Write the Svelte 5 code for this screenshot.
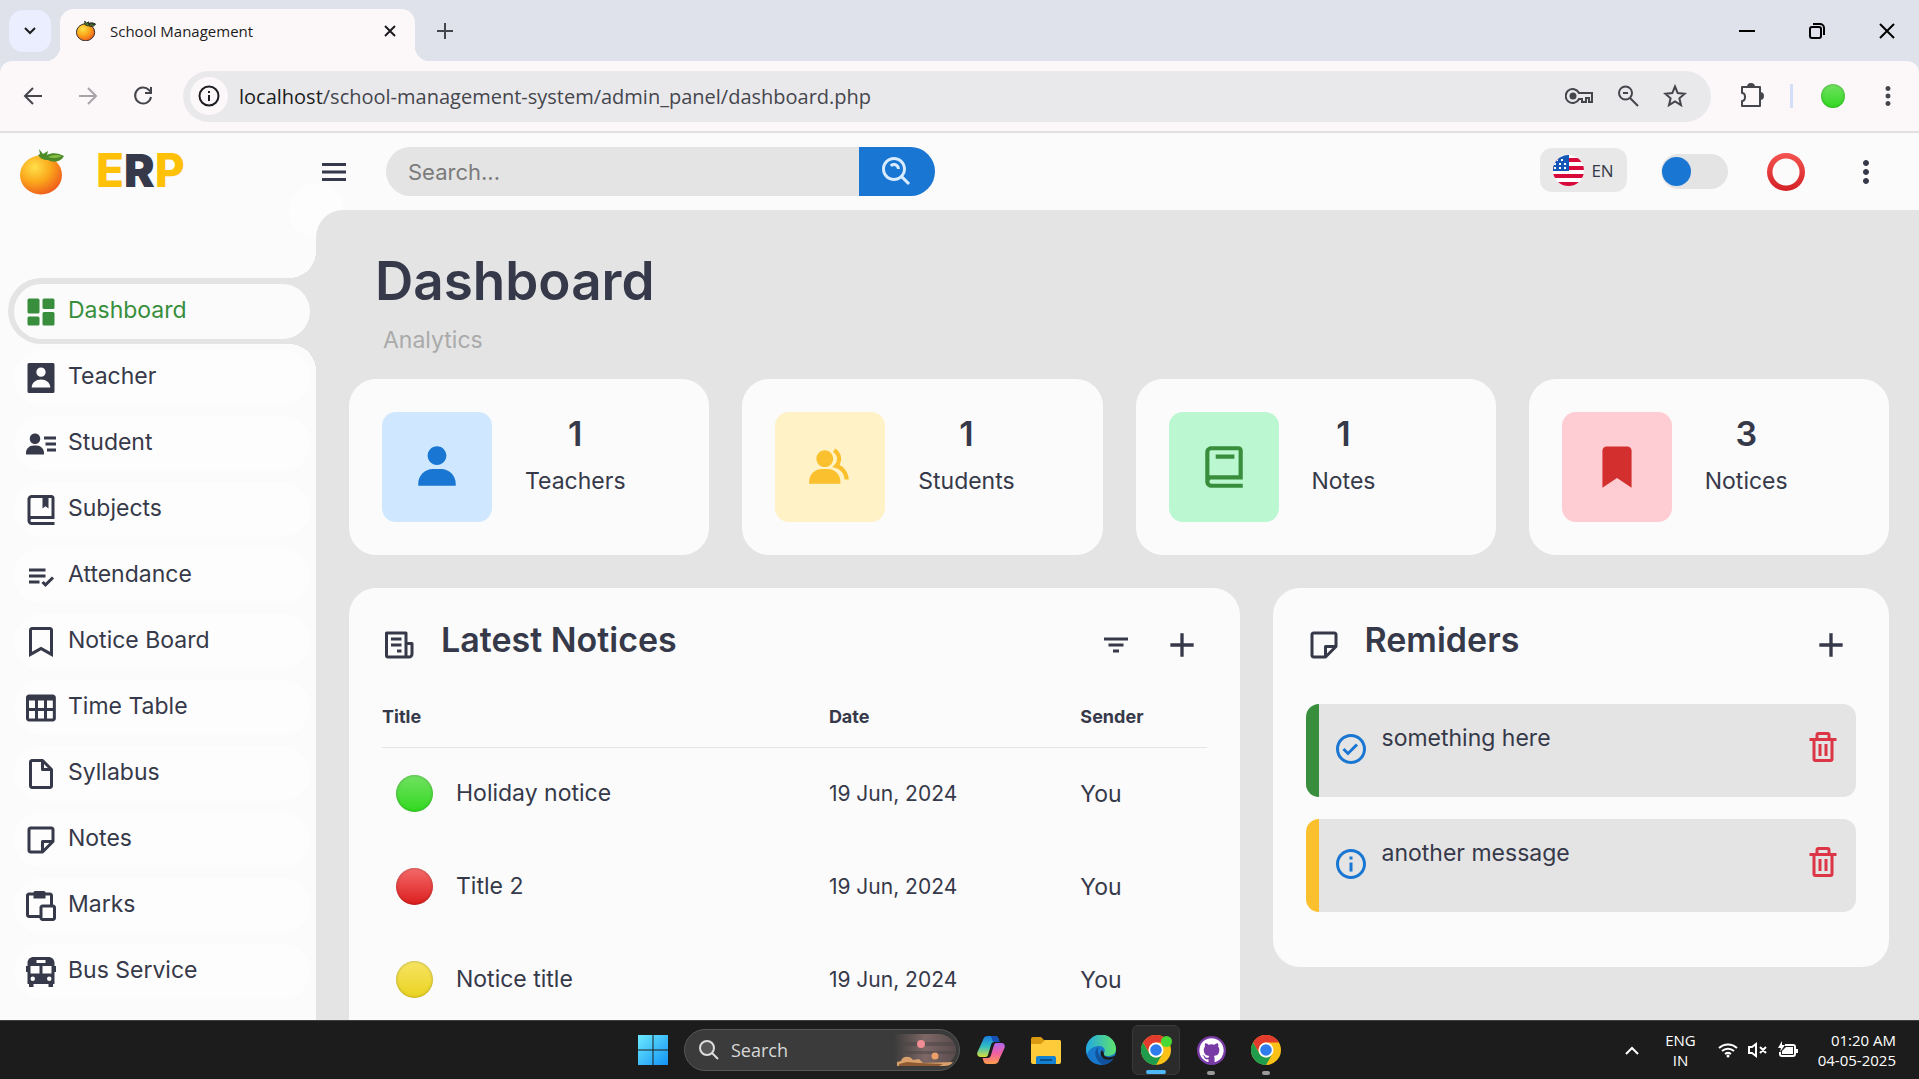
<script lang="ts">
	const icons = {
		dashboard:
			"M4 13h6a1 1 0 0 0 1-1V4a1 1 0 0 0-1-1H4a1 1 0 0 0-1 1v8a1 1 0 0 0 1 1zm-1 7a1 1 0 0 0 1 1h6a1 1 0 0 0 1-1v-4a1 1 0 0 0-1-1H4a1 1 0 0 0-1 1v4zm10 0a1 1 0 0 0 1 1h6a1 1 0 0 0 1-1v-7a1 1 0 0 0-1-1h-6a1 1 0 0 0-1 1v7zm1-10h6a1 1 0 0 0 1-1V4a1 1 0 0 0-1-1h-6a1 1 0 0 0-1 1v5a1 1 0 0 0 1 1z",
		badge: "M4 2h16a1 1 0 0 1 1 1v18a1 1 0 0 1-1 1H4a1 1 0 0 1-1-1V3a1 1 0 0 1 1-1zm8 3a3.1 3.1 0 1 0 0 6.2a3.1 3.1 0 0 0 0-6.2zm0 8c-3.3 0-6.2 2-6.2 5.4h12.4c0-3.4-2.9-5.4-6.2-5.4z",
		student:
			"M15 11h7v2h-7zm1 4h6v2h-6zm-2-8h8v2h-8zM4 19h10v-1c0-2.757-2.243-5-5-5H7c-2.757 0-5 2.243-5 5v1h2zm4-7c1.995 0 3.5-1.505 3.5-3.5S9.995 5 8 5 4.5 6.505 4.5 8.5 6.005 12 8 12z",
		subjects:
			"M6 22h15v-2H6.012C5.55 19.988 5 19.805 5 19s.55-.988 1.012-1H21V4c0-1.103-.897-2-2-2H6c-1.206 0-3 .799-3 3v14c0 2.201 1.794 3 3 3zM5 8V5c0-.805.55-.988 1-1h7v7l2-1.5 2 1.5V4h2v12H5V8z",
		attendance:
			"M4 7h11v2H4zm0 4h11v2H4zm0 4h7v2H4zm15.299-2.708-4.3 4.291-1.292-1.291-1.414 1.415 2.706 2.704 5.712-5.703z",
		bookmark:
			"M18 2H6c-1.103 0-2 .897-2 2v18l8-4.572L20 22V4c0-1.103-.897-2-2-2zm0 16.553-6-3.428-6 3.428V4h12v14.553z",
		table: "M4 21h15.893c1.103 0 2-.897 2-2V5c0-1.103-.897-2-2-2H4c-1.103 0-2 .897-2 2v14c0 1.103.897 2 2 2zm0-2v-5h4v5H4zM14 7v5h-4V7h4zM8 7v5H4V7h4zm2 12v-5h4v5h-4zm6 0v-5h3.894v5H16zm3.893-7H16V7h3.893v5z",
		file: "M19.937 8.68c-.011-.032-.02-.063-.033-.094a.997.997 0 0 0-.196-.293l-6-6a.997.997 0 0 0-.293-.196c-.03-.014-.062-.022-.094-.033a.991.991 0 0 0-.259-.051C13.04 2.011 13.021 2 13 2H6c-1.103 0-2 .897-2 2v16c0 1.103.897 2 2 2h12c1.103 0 2-.897 2-2V9c0-.021-.011-.04-.013-.062a.99.99 0 0 0-.05-.258zM16.586 8H14V5.414L16.586 8zM6 20V4h6v5a1 1 0 0 0 1 1h5l.002 10H6z",
		note: "M19 3H5c-1.103 0-2 .897-2 2v14c0 1.103.897 2 2 2h8a.996.996 0 0 0 .707-.293l7-7a.997.997 0 0 0 .196-.293c.014-.03.022-.061.033-.093a.991.991 0 0 0 .051-.259c.002-.021.013-.041.013-.062V5c0-1.103-.897-2-2-2zM5 5h14v7h-6a1 1 0 0 0-1 1v6H5V5zm9 12.586V14h3.586L14 17.586z",
		paste: "M20 11V5c0-1.103-.897-2-2-2h-3a1 1 0 0 0-1-1H8a1 1 0 0 0-1 1H4c-1.103 0-2 .897-2 2v13c0 1.103.897 2 2 2h7c0 1.103.897 2 2 2h7c1.103 0 2-.897 2-2v-7c0-1.103-.897-2-2-2zm-9 2v5H4V5h3v2h8V5h3v6h-5c-1.103 0-2 .897-2 2zm2 7v-7h7l.001 7H13z",
		bus: "M7 2h10c2.2 0 4 1.5 4 4v2h1v4h-1v8h-1v2h-3v-2H7v2H4v-2H3v-8H2V8h1V6c0-2.5 1.8-4 4-4zm2 2v2h6V4zM5 8v5h6V8zm8 0v5h6V8zM6.5 15a1.5 1.5 0 1 0 0 3a1.5 1.5 0 0 0 0-3zm11 0a1.5 1.5 0 1 0 0 3a1.5 1.5 0 0 0 0-3z",
		menu: "M4 6h16v2H4zm0 5h16v2H4zm0 5h16v2H4z",
		search: "M10 18a7.952 7.952 0 0 0 4.897-1.688l4.396 4.396 1.414-1.414-4.396-4.396A7.952 7.952 0 0 0 18 10c0-4.411-3.589-8-8-8s-8 3.589-8 8 3.589 8 8 8zm0-14c3.309 0 6 2.691 6 6s-2.691 6-6 6-6-2.691-6-6 2.691-6 6-6zM11.412 8.586c.379.38.588.882.588 1.414h2a3.977 3.977 0 0 0-1.174-2.828c-1.514-1.512-4.139-1.512-5.652 0l1.412 1.416c.76-.758 2.07-.756 2.826-.002z",
		dots: "M12 10c-1.1 0-2 .9-2 2s.9 2 2 2 2-.9 2-2-.9-2-2-2zm0-6c-1.1 0-2 .9-2 2s.9 2 2 2 2-.9 2-2-.9-2-2-2zm0 12c-1.1 0-2 .9-2 2s.9 2 2 2 2-.9 2-2-.9-2-2-2z",
		user: "M7.5 6.5C7.5 8.981 9.519 11 12 11s4.5-2.019 4.5-4.5S14.481 2 12 2 7.5 4.019 7.5 6.5zM20 21h1v-1c0-3.859-3.141-7-7-7h-4c-3.86 0-7 3.141-7 7v1h17z",
		group: "M9.5 12c2.206 0 4-1.794 4-4s-1.794-4-4-4-4 1.794-4 4 1.794 4 4 4zm1.5 1H8c-3.309 0-6 2.691-6 6v1h15v-1c0-3.309-2.691-6-6-6zM16.604 11.048a5.67 5.67 0 0 0 .751-3.44c-.179-1.784-1.175-3.361-2.803-4.44l-1.105 1.666c1.119.742 1.8 1.799 1.918 2.974a3.693 3.693 0 0 1-1.072 2.986l-1.192 1.192 1.618.475C18.951 13.701 19 17.957 19 18h2c0-1.789-.956-5.285-4.396-6.952z",
		book: "M6 22h15v-2H6.012C5.55 19.988 5 19.805 5 19s.55-.988 1.012-1H21V4c0-1.103-.897-2-2-2H6c-1.206 0-3 .799-3 3v14c0 2.201 1.794 3 3 3zM5 8V5c0-.805.55-.988 1-1h13v12H5V8zM8 6h9v2H8z",
		bookmarkSolid: "M19 10.132v-6c0-1.103-.897-2-2-2H7c-1.103 0-2 .897-2 2V22l7-4.666L19 22V10.132z",
		news: "M3 3h13a1 1 0 0 1 1 1v6h3a1 1 0 0 1 1 1v7a3 3 0 0 1-3 3H4a2 2 0 0 1-2-2V4a1 1 0 0 1 1-1zm1 2v14h11V5zm13 7v7h1a1 1 0 0 0 1-1v-6zM6 7h7v2H6zm0 4h7v2H6zm4 4h3v2h-3z",
		filter: "M7 11h10v2H7zM4 7h16v2H4zm6 8h4v2h-4z",
		plus: "M19 11h-6V5h-2v6H5v2h6v6h2v-6h6z",
		trash: "M5 20a2 2 0 0 0 2 2h10a2 2 0 0 0 2-2V8h2V6h-4V4a2 2 0 0 0-2-2H9a2 2 0 0 0-2 2v2H3v2h2zM9 4h6v2H9zM7 8h10v12H7zM9 10h2v8H9zm4 0h2v8h-2z",
		check: "M12 2C6.486 2 2 6.486 2 12s4.486 10 10 10 10-4.486 10-10S17.514 2 12 2zm0 18c-4.411 0-8-3.589-8-8s3.589-8 8-8 8 3.589 8 8-3.589 8-8 8zM9.999 13.587 7.7 11.292l-1.412 1.416 3.713 3.705 6.706-6.706-1.414-1.414z",
		info: "M12 2C6.486 2 2 6.486 2 12s4.486 10 10 10 10-4.486 10-10S17.514 2 12 2zm0 18c-4.411 0-8-3.589-8-8s3.589-8 8-8 8 3.589 8 8-3.589 8-8 8zM11 11h2v6h-2zm0-4h2v2h-2z",
	};

	const menu = [
		{ label: "Dashboard", icon: icons.dashboard },
		{ label: "Teacher", icon: icons.badge },
		{ label: "Student", icon: icons.student },
		{ label: "Subjects", icon: icons.subjects },
		{ label: "Attendance", icon: icons.attendance },
		{ label: "Notice Board", icon: icons.bookmark },
		{ label: "Time Table", icon: icons.table },
		{ label: "Syllabus", icon: icons.file },
		{ label: "Notes", icon: icons.note },
		{ label: "Marks", icon: icons.paste },
		{ label: "Bus Service", icon: icons.bus },
	];

	const stats = [
		{ count: 1, label: "Teachers", icon: icons.user, tone: "blue" },
		{ count: 1, label: "Students", icon: icons.group, tone: "yellow" },
		{ count: 1, label: "Notes", icon: icons.book, tone: "green" },
		{ count: 3, label: "Notices", icon: icons.bookmarkSolid, tone: "red" },
	];

	const notices = [
		{ title: "Holiday notice", date: "19 Jun, 2024", sender: "You", tone: "green" },
		{ title: "Title 2", date: "19 Jun, 2024", sender: "You", tone: "red" },
		{ title: "Notice title", date: "19 Jun, 2024", sender: "You", tone: "yellow" },
	];

	const reminders = [
		{ text: "something here", icon: icons.check, tone: "green" },
		{ text: "another message", icon: icons.info, tone: "yellow" },
	];

	let active = $state("Dashboard");
	let search = $state("");
	let dark = $state(false);
</script>

{#snippet icon(d: string, size = 36)}
	<svg width={size} height={size} viewBox="0 0 24 24" fill="currentColor" fill-rule="evenodd" aria-hidden="true">
		<path {d} />
	</svg>
{/snippet}

{#snippet fruit(size: number)}
	<svg width={size} height={size} viewBox="0 0 46 46" aria-hidden="true">
		<defs>
			<radialGradient id="peel" cx="0.35" cy="0.3" r="0.75">
				<stop offset="0" stop-color="#ffe04a" />
				<stop offset="0.5" stop-color="#fba91c" />
				<stop offset="1" stop-color="#ee5a1c" />
			</radialGradient>
		</defs>
		<ellipse cx="22" cy="26" rx="21" ry="19.5" fill="url(#peel)" />
		<path d="M20 0l4 5 5-3-1 4c5-3 12-2 17 1-3 6-10 7-16 4-5 0-8-2-10-5l2-1z" fill="#4d8a2a" />
		<path d="M29 8c4-2 9-3 14-1-4 2-9 3-14 1z" fill="#86bd45" />
	</svg>
{/snippet}

{#snippet chrome()}
	<svg width="30" height="30" viewBox="0 0 30 30" aria-hidden="true">
		<circle cx="15" cy="15" r="15" fill="#fbc116" />
		<path d="M2 7.5A15 15 0 0 1 28 7.5H15a7.5 7.5 0 0 0-6.5 11z" fill="#e33b2e" />
		<path d="M2 7.5A15 15 0 0 0 15 30l6.5-11.3a7.5 7.5 0 0 1-13 0z" fill="#1f9d4d" />
		<circle cx="15" cy="15" r="7.5" fill="#fff" />
		<circle cx="15" cy="15" r="5.8" fill="#2f7ded" />
	</svg>
{/snippet}

<div class="screen">
	<header class="browser">
		<div class="tabs">
			<button class="tab-search" aria-label="Search tabs">
				<svg width="14" height="10" viewBox="0 0 14 10"><path d="M2 2l5 5 5-5" /></svg>
			</button>
			<div class="tab">
				{@render fruit(20)}
				<span>School Management</span>
				<button aria-label="Close tab">
					<svg width="14" height="14" viewBox="0 0 14 14"><path d="M2 2l10 10M12 2L2 12" /></svg>
				</button>
			</div>
			<button class="new-tab" aria-label="New tab">
				<svg width="18" height="18" viewBox="0 0 18 18"><path d="M9 1v16M1 9h16" /></svg>
			</button>
			<div class="window-buttons">
				<button aria-label="Minimize">
					<svg width="16" height="16" viewBox="0 0 16 16"><path d="M0 8h16" /></svg>
				</button>
				<button aria-label="Restore">
					<svg width="16" height="16" viewBox="0 0 16 16">
						<rect x="1" y="4" width="11" height="11" rx="2" />
						<path d="M4 1h7a4 4 0 0 1 4 4v7" />
					</svg>
				</button>
				<button aria-label="Close">
					<svg width="16" height="16" viewBox="0 0 16 16"><path d="M1 1l14 14M15 1L1 15" /></svg>
				</button>
			</div>
		</div>
		<div class="toolbar">
			<button aria-label="Back">
				<svg width="20" height="20" viewBox="0 0 20 20"><path d="M19 10H2M10 2l-8 8 8 8" /></svg>
			</button>
			<button class="faded" aria-label="Forward">
				<svg width="20" height="20" viewBox="0 0 20 20"><path d="M1 10h17M10 2l8 8-8 8" /></svg>
			</button>
			<button aria-label="Reload">
				<svg width="20" height="20" viewBox="0 0 20 20">
					<path d="M18 11a8 8 0 1 1-2-7l2 2M18 1v6h-6" />
				</svg>
			</button>
			<div class="address">
				<button class="site-info" aria-label="Site information">
					<svg width="22" height="22" viewBox="0 0 22 22">
						<circle cx="11" cy="11" r="9.5" /><path d="M11 10v6M11 6v2" />
					</svg>
				</button>
				<p class="url"><b>localhost</b>/school-management-system/admin_panel/dashboard.php</p>
				<button aria-label="Passwords">
					<svg width="28" height="20" viewBox="0 0 28 20">
						<path d="M14 7h13v9h-3v-4h-3v4h-4v-3h-3a7 7 0 1 1 0-6z" />
						<circle cx="8" cy="10" r="2.5" fill="currentColor" />
					</svg>
				</button>
				<button aria-label="Zoom">
					<svg width="22" height="22" viewBox="0 0 22 22">
						<circle cx="8.5" cy="8" r="6.5" /><path d="M13 13l8 8M6 8h5" />
					</svg>
				</button>
				<button aria-label="Bookmark this tab">
					<svg width="24" height="24" viewBox="0 0 24 24">
						<path d="M12 2.5l2.7 6.600 7 .6-5.3 4.6 1.6 6.900-6-3.700-6 3.700 1.600-6.900-5.300-4.600 7-.6z" />
					</svg>
				</button>
			</div>
			<button class="extensions" aria-label="Extensions">
				<svg width="26" height="26" viewBox="0 0 26 26">
					<path d="M3 4h18v19H3v-5c4 0 4-8 0-8z" stroke-linejoin="round" />
					<path d="M9 4a3 3 0 0 1 6 0zM21 10a3 3 0 0 1 0 6z" fill="currentColor" />
				</svg>
			</button>
			<span class="divider"></span>
			<button class="profile" aria-label="Profile"><span class="ball green"></span></button>
			<button class="kebab" aria-label="Browser menu">{@render icon(icons.dots, 30)}</button>
		</div>
	</header>

	<div class="page">
		<aside>
			<a class="brand" href="#home">
				{@render fruit(46)}
				<span>E<b>R</b>P</span>
			</a>
			<ul>
				{#each menu as item}
					<li class:active={active === item.label}>
						<a href="#{item.label}" onclick={() => (active = item.label)}>
							{@render icon(item.icon)}
							<span>{item.label}</span>
						</a>
					</li>
				{/each}
			</ul>
		</aside>

		<div class="content">
			<nav>
				<button aria-label="Toggle menu">{@render icon(icons.menu)}</button>
				<form onsubmit={(event) => event.preventDefault()}>
					<input type="search" aria-label="Search" placeholder="Search..." bind:value={search} />
					<button aria-label="Search">{@render icon(icons.search)}</button>
				</form>
				<button class="language">
					<svg width="31" height="31" viewBox="0 0 31 31" aria-hidden="true">
						<defs><clipPath id="flag"><circle cx="15.5" cy="15.5" r="15.5" /></clipPath></defs>
						<g clip-path="url(#flag)">
							<path d="M0 0h31v31H0z" fill="#fff" />
							<path d="M0 3h31v4H0zM0 11h31v4H0zM0 19h31v4H0zM0 27h31v4H0z" fill="#d80a3a" />
							<path d="M0 0h16v16H0z" fill="#1557b7" />
							<path d="M3 5h10M1 9h14M1 13h14" stroke="#fff" stroke-width="2" stroke-dasharray="2 3" />
						</g>
					</svg>
					EN
				</button>
				<label class="switch">
					<input type="checkbox" aria-label="Dark mode" bind:checked={dark} />
					<span></span>
				</label>
				<button class="ring" aria-label="Account"></button>
				<button class="more" aria-label="More options">{@render icon(icons.dots)}</button>
			</nav>

			<main>
				<h1>Dashboard</h1>
				<p class="subtitle">Analytics</p>

				<ul class="stats">
					{#each stats as stat}
						<li>
							<span class="tile {stat.tone}">{@render icon(stat.icon, 50)}</span>
							<div>
								<h3>{stat.count}</h3>
								<p>{stat.label}</p>
							</div>
						</li>
					{/each}
				</ul>

				<div class="panels">
					<section>
						<div class="head">
							{@render icon(icons.news)}
							<h3>Latest Notices</h3>
							<button aria-label="Filter notices">{@render icon(icons.filter)}</button>
							<button aria-label="Add notice">{@render icon(icons.plus, 40)}</button>
						</div>
						<table>
							<thead>
								<tr>
									<th class="title">Title</th>
									<th class="date">Date</th>
									<th>Sender</th>
								</tr>
							</thead>
							<tbody>
								{#each notices as notice}
									<tr>
										<td>
											<div class="notice">
												<span class="ball {notice.tone}"></span>
												<span class="name">{notice.title}</span>
											</div>
										</td>
										<td class="date">{notice.date}</td>
										<td>{notice.sender}</td>
									</tr>
								{/each}
							</tbody>
						</table>
					</section>

					<section>
						<div class="head">
							{@render icon(icons.note)}
							<h3>Remiders</h3>
							<button aria-label="Add reminder">{@render icon(icons.plus, 40)}</button>
						</div>
						<ul class="reminders">
							{#each reminders as reminder}
								<li class={reminder.tone}>
									{@render icon(reminder.icon)}
									<p>{reminder.text}</p>
									<button aria-label="Delete reminder">{@render icon(icons.trash)}</button>
								</li>
							{/each}
						</ul>
					</section>
				</div>
			</main>
		</div>
	</div>

	<footer class="taskbar">
		<div class="apps">
			<button aria-label="Start">
				<svg width="30" height="30" viewBox="0 0 30 30">
					<defs>
						<linearGradient id="start" x1="0" y1="0" x2="1" y2="1">
							<stop offset="0" stop-color="#6ceaff" />
							<stop offset="1" stop-color="#1293f5" />
						</linearGradient>
					</defs>
					<path
						d="M0 0h14.5v14.5H0zM15.5 0H30v14.5H15.5zM0 15.5h14.5V30H0zM15.5 15.5H30V30H15.5z"
						fill="url(#start)"
					/>
				</svg>
			</button>
			<button class="task-search">
				<svg width="20" height="20" viewBox="0 0 20 20" fill="#555" stroke="#ddd" stroke-width="2">
					<circle cx="8" cy="8" r="7" /><path d="M13 13l6 6" />
				</svg>
				Search
				<svg class="scene" width="62" height="36" viewBox="0 0 62 36">
					<defs>
						<linearGradient id="sky" x1="0" x2="1">
							<stop offset="0" stop-color="#3b3b3b" />
							<stop offset="0.5" stop-color="#7d6866" />
							<stop offset="1" stop-color="#594b4d" />
						</linearGradient>
					</defs>
					<path d="M0 2h44a18 16 0 0 1 0 32H0z" fill="url(#sky)" />
					<path d="M12 10h48l2 4H8zM10 19h52l-1 3H14z" fill="#4a4144" opacity="0.5" />
					<circle cx="27" cy="12" r="4" fill="#f08c93" />
					<circle cx="41" cy="24" r="3.5" fill="#eaa068" />
					<path d="M3 34v-4l4-1c1-5 9-6 12-1l6-1 4 4 30-1c-2 3-5 4-9 4z" fill="#d9a06c" />
					<path d="M5 32l8-2 12 1 24 1-4 2H5z" fill="#8d5a33" />
				</svg>
			</button>
			<button aria-label="Copilot">
				<svg width="28" height="28" viewBox="0 0 28 28">
					<defs>
						<linearGradient id="cool" x1="0" y1="0" x2="0" y2="1">
							<stop offset="0" stop-color="#1b7de0" />
							<stop offset="0.5" stop-color="#32bdc2" />
							<stop offset="1" stop-color="#d8df3c" />
						</linearGradient>
						<linearGradient id="warm" x1="0" y1="0" x2="0" y2="1">
							<stop offset="0" stop-color="#ff9d4d" />
							<stop offset="0.5" stop-color="#f2609e" />
							<stop offset="1" stop-color="#b067ef" />
						</linearGradient>
					</defs>
					<path
						d="M6 4c.7-2.500 2-4 5-4h7c2 0 3 1 3.500 3l1 3h-5c-2 0-3 1-3.500 3l-3 10c-.5 1.500-1.500 2-3 2H3.500C1 21-.5 19 .5 16z"
						fill="url(#cool)"
					/>
					<path
						transform="rotate(180 14 14)"
						d="M6 4c.7-2.500 2-4 5-4h7c2 0 3 1 3.500 3l1 3h-5c-2 0-3 1-3.500 3l-3 10c-.5 1.500-1.500 2-3 2H3.500C1 21-.5 19 .5 16z"
						fill="url(#warm)"
					/>
					<path d="M14 0h4c2 0 3 1 3.500 3l1 3h-5C15 6 15 2 14 0z" fill="#1751b8" />
				</svg>
			</button>
			<button aria-label="File Explorer">
				<svg width="30" height="27" viewBox="0 0 30 27">
					<path d="M0 2a2 2 0 0 1 2-2h8l3 3h15a2 2 0 0 1 2 2v6H0z" fill="#d99a12" />
					<path d="M0 7h10l4-4h14a2 2 0 0 1 2 2v20a2 2 0 0 1-2 2H2a2 2 0 0 1-2-2z" fill="#fecb3b" />
					<path d="M5 27v-6a2 2 0 0 1 2-2h16a2 2 0 0 1 2 2v6z" fill="#1482d0" />
					<path d="M9 23h12" stroke="#095091" stroke-width="2" />
				</svg>
			</button>
			<button aria-label="Edge">
				<svg width="30" height="30" viewBox="0 0 30 30">
					<defs>
						<linearGradient id="wave" x1="0" x2="1">
							<stop offset="0" stop-color="#22a8e2" />
							<stop offset="1" stop-color="#5fe36c" />
						</linearGradient>
					</defs>
					<circle cx="15" cy="15" r="15" fill="#1878cb" />
					<path
						d="M0 15a15 15 0 0 1 30-1c0 5-4 7-8 7-3 0-5-1-4-3 2-3 0-7-5-7-6 0-11 4-12 9z"
						fill="url(#wave)"
					/>
					<path d="M12 12c-5 4-3 14 5 18 6-1 9-4 11-7-8 4-18 0-16-11z" fill="#10529d" />
					<path d="M18 18c-1 4 5 6 12 2l-1 3c-6 3-12 2-14-2-1-3 0-5 1-6z" fill="#1d1d1d" />
				</svg>
			</button>
			<button class="app focused" aria-label="Chrome">
				{@render chrome()}
				<i class="badge"></i>
			</button>
			<button class="app" aria-label="GitHub Desktop">
				<svg width="29" height="29" viewBox="0 0 16 16">
					<circle cx="8" cy="8" r="8" fill="#783aa5" />
					<path
						transform="translate(1.3 1.3) scale(0.84)"
						fill="#fff"
						d="M8 0C3.58 0 0 3.58 0 8c0 3.54 2.29 6.53 5.47 7.59.4.07.55-.17.55-.38 0-.19-.01-.82-.01-1.49-2.01.37-2.53-.49-2.69-.94-.09-.23-.48-.94-.82-1.13-.28-.15-.68-.52-.01-.53.63-.01 1.08.58 1.23.82.72 1.21 1.87.87 2.33.66.07-.52.28-.87.51-1.07-1.78-.2-3.64-.89-3.64-3.95 0-.87.31-1.59.82-2.15-.08-.2-.36-1.02.08-2.12 0 0 .67-.21 2.2.82a7.6 7.6 0 0 1 4 0c1.53-1.04 2.2-.82 2.2-.82.44 1.1.16 1.92.08 2.12.51.56.82 1.27.82 2.15 0 3.07-1.87 3.75-3.65 3.95.29.25.54.73.54 1.48 0 1.07-.01 1.93-.01 2.2 0 .21.15.46.55.38A8 8 0 0 0 16 8c0-4.42-3.58-8-8-8z"
					/>
				</svg>
			</button>
			<button class="app" aria-label="Chrome">{@render chrome()}</button>
		</div>
		<div class="tray">
			<button aria-label="Show hidden icons">
				<svg width="14" height="9" viewBox="0 0 14 9"><path d="M1 8l6-6 6 6" /></svg>
			</button>
			<button class="keyboard">ENG<br />IN</button>
			<button class="status" aria-label="Network, volume and battery">
				<svg width="20" height="16" viewBox="0 0 20 16">
					<path d="M1 6a13 13 0 0 1 18 0M4 9a9 9 0 0 1 12 0M7 12a5 5 0 0 1 6 0" />
					<circle cx="10" cy="14" r="1.5" fill="#fff" stroke="none" />
				</svg>
				<svg width="20" height="16" viewBox="0 0 20 16">
					<path d="M1 5h3l4-3v12l-4-3H1zM12 5l6 6M18 5l-6 6" />
				</svg>
				<svg width="20" height="18" viewBox="0 0 20 18">
					<path d="M7 4h8a2 2 0 0 1 2 2v7a2 2 0 0 1-2 2H4a2 2 0 0 1-2-2v-2" />
					<path d="M8 6h7v7H4v-3zM17 8h3v4h-3zM4 0L0 7h3l-1 4 5-7H4z" fill="#fff" stroke="none" />
				</svg>
			</button>
			<button class="clock">01:20 AM<br />04-05-2025</button>
		</div>
	</footer>
</div>

<style>
	:global(body) {
		margin: 0;
	}

	.screen {
		--light: #fbfbfb;
		--grey: #e4e4e4;
		--dark: #363949;
		--blue: #1976d2;
		display: flex;
		flex-direction: column;
		height: 100vh;
		overflow: hidden;
		background: var(--grey);
		color: var(--dark);
		font-family: Inter, "Open Sans", sans-serif;
		font-size: 23px;
	}

	svg {
		flex: none;
		display: block;
	}

	button {
		display: flex;
		align-items: center;
		justify-content: center;
		padding: 0;
		border: 0;
		background: none;
		color: inherit;
		font: inherit;
	}

	a {
		color: inherit;
		text-decoration: none;
	}

	ul {
		margin: 0;
		padding: 0;
		list-style: none;
	}

	h1,
	h3,
	p {
		margin: 0;
	}

	/* browser */
	.browser {
		flex: none;
		background: #dfe2eb;
		color: #45464c;
		font-family: "Open Sans", sans-serif;
	}

	.browser svg:not([fill]) {
		fill: none;
		stroke: currentColor;
		stroke-width: 2;
	}

	.tabs {
		display: flex;
		align-items: center;
		height: 61px;
		padding-left: 9px;
	}

	.tab-search {
		width: 42px;
		height: 42px;
		border-radius: 14px;
		background: #ebeeff;
		color: #1c1c20;
	}

	.tab {
		position: relative;
		align-self: flex-end;
		display: flex;
		align-items: center;
		gap: 14px;
		width: 355px;
		height: 52px;
		margin-left: 9px;
		padding: 0 18px 8px 16px;
		box-sizing: border-box;
		border-radius: 14px 14px 0 0;
		background: #fcf8fa;
		color: #1c1c20;
		font-size: 15px;
	}

	.tab span {
		flex: 1;
	}

	.tab::before,
	.tab::after {
		content: "";
		position: absolute;
		bottom: 0;
		width: 14px;
		height: 14px;
	}

	.tab::before {
		right: 100%;
		background: radial-gradient(circle at 0 0, transparent 14px, #fcf8fa 14px);
	}

	.tab::after {
		left: 100%;
		background: radial-gradient(circle at 100% 0, transparent 14px, #fcf8fa 14px);
	}

	.new-tab {
		margin-left: 21px;
	}

	.window-buttons {
		display: flex;
		gap: 54px;
		margin-left: auto;
		padding-right: 24px;
		color: #000;
	}

	.toolbar {
		display: flex;
		align-items: center;
		height: 70px;
		padding: 0 16px 0 23px;
		border-bottom: 2px solid #e4e0e2;
		border-radius: 12px 12px 0 0;
		background: #fcf8fa;
	}

	.toolbar > button {
		margin-right: 35px;
	}

	.toolbar > .faded {
		color: #a5a4a8;
	}

	.address {
		flex: 1;
		display: flex;
		align-items: center;
		gap: 24px;
		height: 51px;
		margin-left: -5px;
		padding: 0 24px 0 7px;
		border-radius: 26px;
		background: #e9e9ec;
	}

	.site-info {
		width: 38px;
		height: 38px;
		border-radius: 50%;
		background: #fcf8fa;
		color: #1c1c20;
	}

	.url {
		flex: 1;
		margin-left: -13px;
		font-size: 20px;
	}

	.url b {
		color: #1c1c20;
		font-weight: 400;
	}

	.toolbar > .extensions {
		margin: 0 25px 0 28px;
	}

	.divider {
		width: 3px;
		height: 24px;
		background: #d5def8;
	}

	.toolbar > .profile {
		margin: 0 28px;
	}

	.profile .ball {
		width: 24px;
		height: 24px;
	}

	.toolbar > .kebab {
		margin: 0;
	}

	.ball {
		width: 37px;
		height: 37px;
		border-radius: 50%;
		box-shadow: inset 0 0 3px rgb(0 0 0 / 30%);
	}

	.ball.green {
		background: linear-gradient(#72e162, #31d91f);
	}

	.ball.red {
		background: linear-gradient(#f56a6a, #db1d1d);
	}

	.ball.yellow {
		background: linear-gradient(#f6e464, #ead31f);
	}

	/* sidebar */
	.page {
		flex: 1;
		display: flex;
		min-height: 0;
		overflow: hidden;
	}

	aside {
		flex: none;
		width: 316px;
		background: var(--light);
	}

	.brand {
		display: flex;
		align-items: center;
		gap: 31px;
		height: 77px;
		padding-left: 19px;
		color: #fec107;
		font-size: 46px;
		font-weight: 800;
	}

	.brand span {
		padding-bottom: 4px;
	}

	.brand b {
		color: var(--dark);
	}

	aside ul {
		margin-top: 68px;
	}

	aside li {
		position: relative;
		margin-left: 8px;
		padding: 6px 6px 5px;
		border-radius: 33px 0 0 33px;
	}

	aside li a {
		display: flex;
		align-items: center;
		gap: 9px;
		height: 55px;
		padding-left: 9px;
		border-radius: 28px;
		background: #fdfdfd;
	}

	aside li span {
		padding-bottom: 3px;
	}

	aside li.active {
		background: var(--grey);
	}

	aside li.active a {
		background: var(--light);
		color: #388e3c;
	}

	/* rounded joins between the active item and the content area */
	aside li.active::before,
	aside li.active::after {
		content: "";
		position: absolute;
		z-index: 1;
		right: 0;
		width: 27px;
		height: 27px;
	}

	aside li.active::before {
		bottom: 100%;
		background: radial-gradient(circle at 0 0, transparent 27px, var(--grey) 27px);
	}

	aside li.active::after {
		top: 100%;
		background: radial-gradient(circle at 0 100%, transparent 27px, var(--grey) 27px);
	}

	/* top bar */
	.content {
		flex: 1;
		min-width: 0;
	}

	nav {
		position: relative;
		display: flex;
		align-items: center;
		height: 77px;
		padding-right: 35px;
		background: var(--light);
	}

	nav::before {
		content: "";
		position: absolute;
		top: 100%;
		left: 0;
		width: 55px;
		height: 55px;
		border-radius: 50%;
		box-shadow: -27px -27px 0 #fdfdfd;
		pointer-events: none;
	}

	nav form {
		display: flex;
		flex: 0 1 549px;
		height: 49px;
		margin-left: 34px;
	}

	nav input[type="search"] {
		flex: 1;
		min-width: 0;
		padding: 0 22px;
		border: 0;
		border-radius: 25px 0 0 25px;
		background: var(--grey);
		color: inherit;
		font: inherit;
		font-size: 22px;
	}

	nav input::placeholder {
		color: #7b7b7b;
	}

	nav form button {
		width: 76px;
		border-radius: 0 25px 25px 0;
		background: var(--blue);
		color: #d9ebff;
	}

	.language {
		gap: 7px;
		width: 87px;
		height: 44px;
		margin-bottom: 3px;
		margin-left: auto;
		border-radius: 12px;
		background: #e8e8e8;
		font-family: "Open Sans", sans-serif;
		font-size: 17px;
	}

	.switch {
		margin-left: 34px;
		height: 35px;
	}

	.switch input {
		position: absolute;
		opacity: 0;
	}

	.switch span {
		display: flex;
		align-items: center;
		width: 67px;
		height: 35px;
		border-radius: 18px;
		background: var(--grey);
	}

	.switch span::before {
		content: "";
		width: 29px;
		height: 29px;
		margin: 0 1px;
		border-radius: 50%;
		background: var(--blue);
	}

	.switch input:checked + span {
		justify-content: flex-end;
	}

	.ring {
		width: 38px;
		height: 38px;
		margin: 0 43px 0 39px;
		border-radius: 50%;
		background:
			radial-gradient(circle, var(--light) 13px, transparent 14px),
			linear-gradient(#f45450, #d42126);
	}

	.more {
		width: 36px;
	}

	/* main area */
	main {
		padding: 39px 30px 33px 33px;
	}

	h1 {
		padding-left: 26px;
		font-size: 53px;
		font-weight: 600;
		line-height: 64px;
	}

	.subtitle {
		margin: 11px 0 23px;
		padding-left: 34px;
		color: #aaa;
		line-height: 32px;
	}

	.stats {
		display: grid;
		grid-template-columns: repeat(4, minmax(0, 1fr));
		gap: 33px;
	}

	.stats li {
		display: flex;
		gap: 33px;
		padding: 33px;
		border-radius: 27px;
		background: var(--light);
		text-align: center;
	}

	.stats h3 {
		font-size: 34px;
		font-weight: 600;
		line-height: 44px;
	}

	.stats p {
		line-height: 50px;
	}

	.tile {
		display: grid;
		place-items: center;
		width: 110px;
		height: 110px;
		border-radius: 14px;
	}

	.tile.blue {
		background: #cfe8ff;
		color: var(--blue);
	}

	.tile.yellow {
		background: #fff2c6;
		color: #fbc02d;
	}

	.tile.green {
		background: #bbf7d0;
		color: #388e3c;
	}

	.tile.red {
		background: #fecdd3;
		color: #d32f2f;
	}

	.panels {
		display: grid;
		grid-template-columns: minmax(0, 13fr) minmax(0, 9fr);
		align-items: start;
		gap: 33px;
		margin-top: 33px;
	}

	.panels section {
		padding: 33px 33px 55px;
		border-radius: 27px;
		background: var(--light);
	}

	.head {
		display: flex;
		align-items: flex-end;
		height: 42px;
		padding-right: 7px;
	}

	.head h3 {
		flex: 1;
		align-self: flex-start;
		margin-left: 23px;
		font-size: 34px;
		font-weight: 600;
		line-height: 38px;
	}

	.head button {
		width: 36px;
		height: 36px;
		margin-left: 30px;
	}

	table {
		width: 100%;
		margin-top: 42px;
		border-collapse: collapse;
		table-layout: fixed;
	}

	th {
		padding: 0 0 18px;
		border-bottom: 1px solid var(--grey);
		font-size: 18px;
		line-height: 24px;
		text-align: left;
	}

	th.title {
		width: 54.2%;
	}

	th.date {
		width: 30.5%;
	}

	td {
		height: 91px;
		padding: 0 0 2px;
		line-height: 28px;
	}

	td.date {
		font-size: 21px;
	}

	.notice {
		display: flex;
		align-items: center;
		gap: 23px;
		padding-left: 14px;
	}

	.notice .name {
		padding-bottom: 2px;
	}

	.reminders {
		display: grid;
		gap: 22px;
		margin-top: 41px;
	}

	.reminders li {
		display: flex;
		align-items: center;
		gap: 13px;
		height: 90px;
		padding: 0 15px 3px 14px;
		border-left: 13px solid;
		border-radius: 13px;
		background: var(--grey);
	}

	.reminders li.green {
		border-color: #388e3c;
	}

	.reminders li.yellow {
		border-color: #fbc02d;
	}

	.reminders li > :global(svg) {
		color: var(--blue);
	}

	.reminders p {
		flex: 1;
		margin-bottom: 22px;
	}

	.reminders button {
		margin-bottom: 4px;
		color: #dc3545;
	}

	/* taskbar */
	.taskbar {
		flex: none;
		display: grid;
		grid-template-columns: 1fr auto 1fr;
		height: 59px;
		box-sizing: border-box;
		border-top: 1px solid #3c403e;
		background: #1c1c1c;
		color: #fff;
		font-family: "Open Sans", sans-serif;
		font-size: 15px;
	}

	.apps {
		grid-column: 2;
		display: flex;
		align-items: center;
		gap: 7px;
	}

	.apps > button {
		position: relative;
		width: 48px;
		height: 50px;
	}

	.apps > .task-search {
		justify-content: flex-start;
		gap: 12px;
		width: 276px;
		height: 42px;
		padding: 0 3px 0 14px;
		border: 1px solid #565656;
		border-radius: 21px;
		background: #3b3b3b;
		color: #d8d8d8;
		font-size: 18px;
	}

	.scene {
		margin-left: auto;
	}

	.app::after {
		content: "";
		position: absolute;
		bottom: 0;
		width: 8px;
		height: 4px;
		border-radius: 2px;
		background: #9a9a9a;
	}

	.app.focused {
		border: 1px solid #393939;
		border-radius: 6px;
		background: #2b2b2b;
	}

	.app.focused::after {
		width: 20px;
		background: #4cb8f8;
	}

	.badge {
		position: absolute;
		top: 10px;
		right: 7px;
		width: 11px;
		height: 11px;
		border-radius: 50%;
		background: #49d936;
	}

	.tray {
		display: flex;
		align-items: center;
		justify-content: flex-end;
		padding-right: 23px;
	}

	.tray svg {
		fill: none;
		stroke: #fff;
		stroke-width: 2;
	}

	.keyboard,
	.clock {
		line-height: 20px;
	}

	.keyboard {
		margin: 0 22px 0 26px;
	}

	.status {
		gap: 10px;
		margin-right: 20px;
	}

	.clock {
		text-align: right;
	}
</style>
